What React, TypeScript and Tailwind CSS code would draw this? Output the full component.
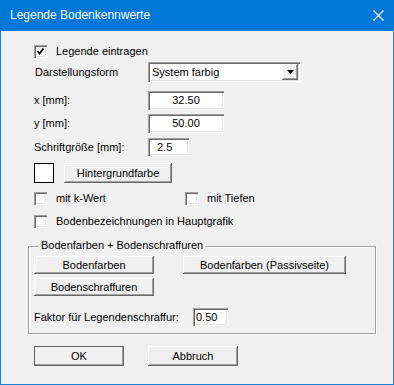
import React from 'react';

const raised =
  'bg-[#f0f0f0] shadow-[inset_-1px_-1px_0_#696969,inset_1px_1px_0_#ffffff,inset_-2px_-2px_0_#a0a0a0]';
const sunken =
  'bg-white shadow-[inset_1px_1px_0_#a0a0a0,inset_2px_2px_0_#696969,inset_-1px_-1px_0_#ffffff,inset_-2px_-2px_0_#e3e3e3]';

const Btn: React.FC<{ label: string; w: string; h?: string; isDefault?: boolean }> = ({
  label,
  w,
  h = 'h-[18px]',
  isDefault,
}) => (
  <div
    className={`${w} ${h} ${raised} ${isDefault ? 'outline outline-1 outline-[#646464] -outline-offset-1' : ''} flex items-center justify-center shrink-0`}
  >
    {label}
  </div>
);

const Edit: React.FC<{ value: string; w: string; h?: string; align?: string }> = ({
  value,
  w,
  h = 'h-[19px]',
  align = 'justify-center',
}) => (
  <div className={`${w} ${h} ${sunken} flex items-center ${align} shrink-0`}>{value}</div>
);

const Check: React.FC<{ checked?: boolean }> = ({ checked }) => (
  <div className={`w-[13px] h-[13px] ${sunken} shrink-0 flex items-center justify-center`}>
    {checked && (
      <svg width="9" height="9" viewBox="0 0 9 9">
        <polyline points="1.5,4 3.5,6.5 7.5,1.5" fill="none" stroke="#000" strokeWidth="1.8" />
      </svg>
    )}
  </div>
);

const CheckRow: React.FC<{ label: string; checked?: boolean; w?: string }> = ({ label, checked, w }) => (
  <div className={`flex items-center gap-[9px] ${w ?? ''}`}>
    <Check checked={checked} />
    <span>{label}</span>
  </div>
);

export default function App() {
  return (
    <div className="w-[394px] h-[385px] bg-[#f0f0f0] border border-t-0 border-[#1883d7] flex flex-col text-[11px] leading-[13px] text-black font-['Liberation_Sans',Arial,sans-serif]">
      {/* Title bar */}
      <div className="h-[31px] bg-[#0078d7] -mx-px flex items-center justify-between pl-[10px] pr-[10px] shrink-0">
        <span className="text-white text-[12px] font-['Liberation_Sans',sans-serif]">
          Legende Bodenkennwerte
        </span>
        <svg width="11" height="11" viewBox="0 0 11 11">
          <path d="M0.5 0.5 L10.5 10.5 M10.5 0.5 L0.5 10.5" stroke="#fff" strokeWidth="1.1" />
        </svg>
      </div>

      <div className="pl-[27px] flex flex-col">
        <div className="pl-[6px] flex flex-col">
          <div className="mt-[14px]">
            <CheckRow label="Legende eintragen" checked />
          </div>

          <div className="mt-[4px] flex items-center h-[20px]">
            <span className="w-[114px] pl-px">Darstellungsform</span>
            <div className={`w-[152px] h-[20px] ${sunken} flex items-center justify-between pl-[4px] pr-[2px]`}>
              <span>System farbig</span>
              <div className={`w-[16px] h-[16px] ${raised} flex items-center justify-center`}>
                <svg width="7" height="4" viewBox="0 0 7 4">
                  <path d="M0 0 H7 L3.5 4 Z" fill="#000" />
                </svg>
              </div>
            </div>
          </div>

          <div className="mt-[9px] flex items-center">
            <span className="w-[114px]">x [mm]:</span>
            <Edit value="32.50" w="w-[76px]" />
          </div>
          <div className="mt-[4px] flex items-center">
            <span className="w-[114px]">y [mm]:</span>
            <Edit value="50.00" w="w-[76px]" />
          </div>
          <div className="mt-[5px] flex items-center">
            <span className="w-[114px]">Schriftgröße [mm]:</span>
            <Edit value="2.5" w="w-[41px]" h="h-[18px]" align="justify-start pl-[9px]" />
          </div>

          <div className="mt-[7px] flex items-center gap-[10px]">
            <div className="w-[20px] h-[20px] bg-white border border-black" />
            <Btn label="Hintergrundfarbe" w="w-[108px]" h="h-[20px]" />
          </div>

          <div className="mt-[9px] flex items-center">
            <CheckRow label="mit k-Wert" w="w-[151px]" />
            <CheckRow label="mit Tiefen" />
          </div>

          <div className="mt-[10px]">
            <CheckRow label="Bodenbezeichnungen in Hauptgrafik" />
          </div>
        </div>

        {/* Group box */}
        <div className="relative mt-[18px] w-[348px] h-[88px] border border-[#a0a0a0] shadow-[1px_1px_0_#ffffff,inset_1px_1px_0_#ffffff] pt-[9px] pl-[5px] flex flex-col">
          <span className="absolute -top-[8px] left-[10px] px-[2px] bg-[#f0f0f0]">
            Bodenfarben + Bodenschraffuren
          </span>
          <div className="flex gap-[29px]">
            <Btn label="Bodenfarben" w="w-[120px]" />
            <Btn label="Bodenfarben (Passivseite)" w="w-[163px]" />
          </div>
          <div className="mt-[4px] flex">
            <Btn label="Bodenschraffuren" w="w-[120px]" />
          </div>
          <div className="mt-[12px] flex items-center">
            <span className="w-[159px]">Faktor für Legendenschraffur:</span>
            <Edit value="0.50" w="w-[35px]" h="h-[18px]" align="justify-start pl-[3px]" />
          </div>
        </div>

        <div className="pl-[6px] mt-[12px] flex gap-[24px]">
          <Btn label="OK" w="w-[90px]" h="h-[20px]" isDefault />
          <Btn label="Abbruch" w="w-[90px]" h="h-[20px]" />
        </div>
      </div>
    </div>
  );
}
